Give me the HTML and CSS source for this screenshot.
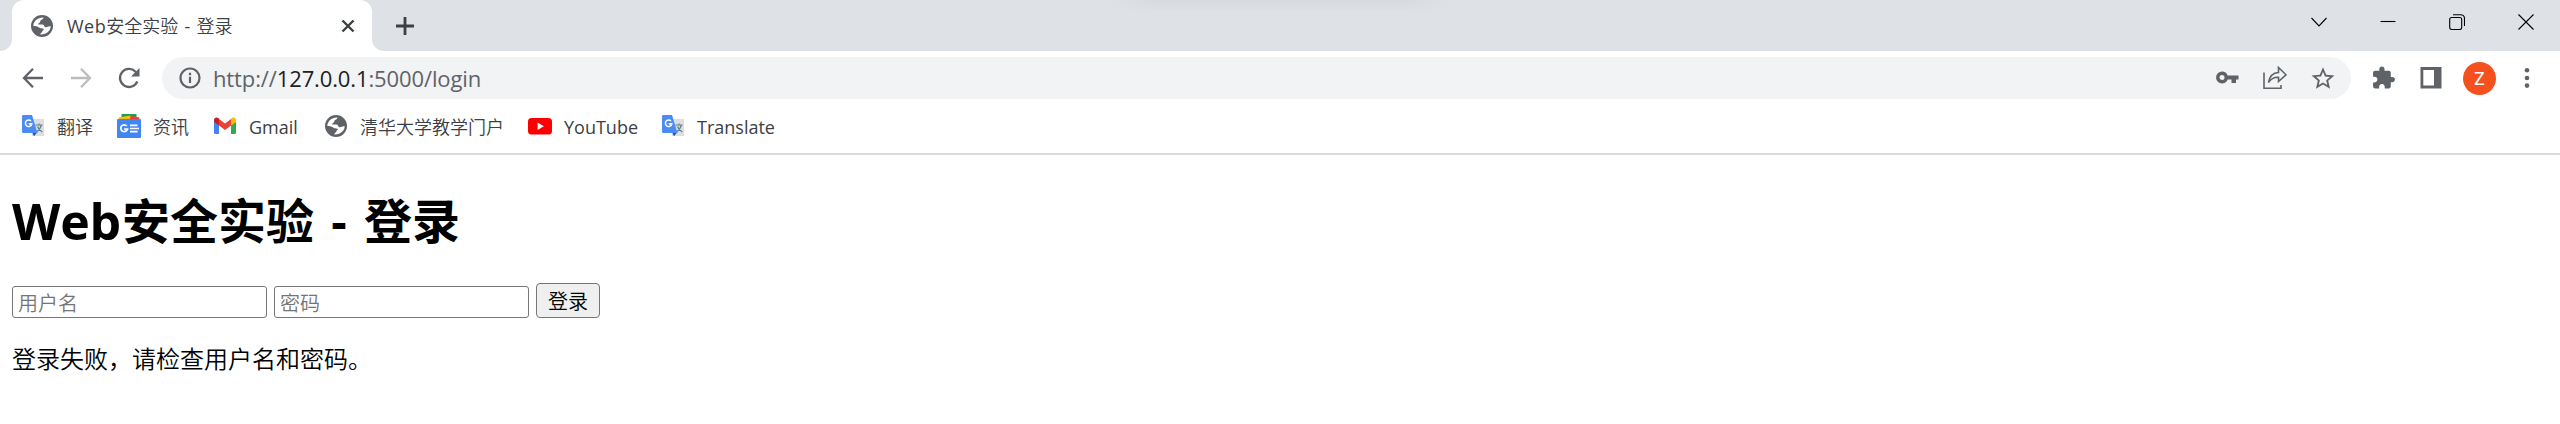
FILE: index.html
```html
<!DOCTYPE html>
<html lang="zh-CN">
<head>
<meta charset="utf-8">
<title>Web安全实验 - 登录</title>
<link rel="stylesheet" href="styles.css">
</head>
<body>
<svg class="defs" aria-hidden="true">
  <symbol id="globe" viewBox="0 0 22 22">
    <circle cx="11" cy="11" r="11" fill="#5f6368"/>
    <path d="M2.300 11C2.300 6.500 6.500 2.300 12.500 2.500C12.300 4.200 10.800 4.400 9.800 5.300C9 6.100 9.600 7 8.500 7.700C7.600 8.300 6.800 8.500 7.200 9.600H11.500C13.500 9.800 12.800 12 14.500 12.200C16.500 12.400 17 11 19.700 11.300C19.500 16 15.500 19.800 9.300 19.500C9.200 17.900 11 17.800 11.300 16.500C11.500 15.300 12.800 15.500 12.800 14.300C12.700 13.300 10.500 13.700 9.300 13.200C7.500 12.400 7 11 2.300 11Z" fill="#fff"/>
  </symbol>
  <symbol id="translate" viewBox="0 0 24 24">
    <path d="M9 5H22Q23 5 23 6V22H11Z" fill="#dcdee0"/>
    <path d="M14.500 11H21.500M18 9.500V11M20.500 11C19.700 14 17.500 16.500 15.500 18M16.500 12.500C17.500 15 19.500 17 21.300 18" stroke="#607d8b" stroke-width="1.200" fill="none"/>
    <path d="M11 18H16.500L13 22.300Z" fill="#3549b5"/>
    <path d="M2.200 1H11L16.500 19H2.200Q1 19 1 17.800V2.200Q1 1 2.200 1Z" fill="#4b8bf5"/>
    <path d="M10 7.100A3.200 3.200 0 1 0 10.800 9.800H7.700" stroke="#fff" stroke-width="1.500" fill="none"/>
  </symbol>
</svg>

<header class="browser">
  <div class="tabstrip">
    <div class="tab">
      <svg class="favicon"><use href="#globe"/></svg>
      <span class="tab-title"><span class="tab-latin">Web</span>安全实验 - 登录</span>
      <svg class="tab-close" viewBox="0 0 14 14"><path d="M1.500 1.500L12.500 12.500M12.500 1.500L1.500 12.500"/></svg>
    </div>
    <svg class="new-tab" viewBox="0 0 18 18"><path d="M9 0V18M0 9H18"/></svg>
    <div class="top-shadow"></div>
    <div class="window-controls">
      <svg viewBox="0 0 16 16"><path d="M.5 4L8 12L15.500 4"/></svg>
      <svg viewBox="0 0 16 16"><path d="M.5 7.500H15.500"/></svg>
      <svg viewBox="0 0 16 16"><rect x=".7" y="3.500" width="12" height="12" rx="2"/><path d="M4 .7H11.500Q15.500 .7 15.500 4.700V12"/></svg>
      <svg viewBox="0 0 16 16"><path d="M.5 .5L15.500 15.500M15.500 .5L.5 15.500"/></svg>
    </div>
  </div>

  <div class="toolbar">
    <div class="nav">
      <svg viewBox="0 0 24 24"><path d="M22 12H3.500M12 2.800L3 12L12 21.200"/></svg>
      <svg class="disabled" viewBox="0 0 24 24"><path d="M2 12H20.500M12 2.800L21 12L12 21.200"/></svg>
      <svg viewBox="0 0 24 24"><path d="M20.300 15.500A9 9 0 1 1 18.500 5.700L20.500 8"/><path class="solid" d="M22.500 2V10.500H14Z"/></svg>
    </div>
    <div class="omnibox">
      <svg class="info" viewBox="0 0 22 22"><circle cx="11" cy="11" r="9.500"/><path d="M11 9.800V16M11 5.800V8.200"/></svg>
      <span class="url">http://<b>127.0.0.1</b>:5000/login</span>
      <div class="page-actions">
        <svg class="fill" viewBox="0 0 24 24"><path fill-rule="evenodd" d="M7 5.500A6 6 0 1 0 12.700 13.500H16.500V17H21V13.500H23.500V9.500H12.700A6 6 0 0 0 7 5.500ZM7 9A2.500 2.500 0 1 1 7 14A2.500 2.500 0 0 1 7 9Z"/></svg>
        <svg class="share" viewBox="0 0 24 24"><path d="M1 6.500V22.300H18V19M5.500 16.500C6.500 10.500 10 6.800 15.500 6.500V1.500L23 8.800L15.500 15.500V11.200C11 11 8 12.500 5.500 16.500Z"/></svg>
        <svg class="fill" viewBox="1.500 1 21 21"><path d="M22 9.240l-7.190-.62L12 2 9.190 8.630 2 9.240l5.460 4.730L5.820 21 12 17.270 18.180 21l-1.630-7.030L22 9.240zM12 15.400l-3.760 2.270 1-4.280-3.320-2.880 4.380-.38L12 6.100l1.710 4.040 4.380.38-3.320 2.880 1 4.280L12 15.400z"/></svg>
      </div>
    </div>
    <div class="extensions">
      <svg class="fill" viewBox="1 .5 23 23"><path d="M20.500 11H19V7c0-1.100-.9-2-2-2h-4V3.500C13 2.120 11.880 1 10.500 1S8 2.120 8 3.500V5H4c-1.100 0-1.990.9-1.990 2v3.800H3.500c1.490 0 2.700 1.210 2.700 2.700s-1.210 2.700-2.700 2.700H2V20c0 1.100.9 2 2 2h3.800v-1.500c0-1.490 1.210-2.700 2.700-2.700 1.490 0 2.700 1.210 2.700 2.700V22H17c1.100 0 2-.9 2-2v-4h1.500c1.380 0 2.500-1.120 2.500-2.500S21.880 11 20.500 11z"/></svg>
      <svg class="fill" viewBox="0 0 24 24"><path fill-rule="evenodd" d="M1.500 1H22.500V22.500H1.500ZM4.300 4V19.500H15V4Z"/></svg>
      <span class="avatar">Z</span>
      <svg class="fill menu" viewBox="0 0 24 24"><circle cx="12" cy="4.300" r="2.300"/><circle cx="12" cy="12" r="2.300"/><circle cx="12" cy="19.600" r="2.300"/></svg>
    </div>
  </div>

  <nav class="bookmarks">
    <a class="bookmark"><svg viewBox="0 0 24 24"><use href="#translate"/></svg><span>翻译</span></a>
    <a class="bookmark"><svg viewBox="0 0 24 24"><path d="M4.500 0H19.500V5H4.500Z" fill="#1e9e54"/><path d="M1.500 3.500L13 1.500L15 6H2Z" fill="#fbbc04"/><path d="M14 1.800L22.500 3.500L22 6H12.500Z" fill="#ea4335"/><rect y="5" width="24" height="19" rx="1" fill="#4285f4"/><path d="M9.800 12A3.400 3.400 0 1 0 10.500 15H7" stroke="#fff" stroke-width="1.700" fill="none"/><path d="M13 11.300H20.500M13 14.500H22M13 17.700H20.500" stroke="#fff" stroke-width="1.700"/></svg><span>资讯</span></a>
    <a class="bookmark gmail"><svg viewBox="0 0 24 24"><path d="M1 6H6V20H2.500Q1 20 1 18.500Z" fill="#4285f4"/><path d="M18 6H23V18.500Q23 20 21.500 20H18Z" fill="#34a853"/><path d="M6 5L12 9.500L18 5V11.500L12 16L6 11.500Z" fill="#ea4335"/><path d="M1 8V6C1 3.300 3.800 2.700 6 4.500V11.500Z" fill="#c5221f"/><path d="M23 8V6C23 3.300 20.200 2.700 18 4.500V11.500Z" fill="#fbbc04"/></svg><span>Gmail</span></a>
    <a class="bookmark"><svg viewBox="-1 -1 24 24"><use href="#globe" width="22" height="22"/></svg><span>清华大学教学门户</span></a>
    <a class="bookmark youtube"><svg viewBox="0 0 24 24"><rect y="4" width="24" height="16.500" rx="3.500" fill="#f00"/><path d="M9.600 8.500V16L15.800 12.250Z" fill="#fff"/></svg><span>YouTube</span></a>
    <a class="bookmark"><svg viewBox="0 0 24 24"><use href="#translate"/></svg><span>Translate</span></a>
  </nav>
</header>

<main class="page">
  <h1><span class="word">Web</span>安全实验<span class="dash">-</span>登录</h1>
  <form class="login">
    <input type="text" placeholder="用户名">
    <input type="password" placeholder="密码">
    <button type="button">登录</button>
  </form>
  <p>登录失败，请检查用户名和密码。</p>
</main>
</body>
</html>
```
FILE: styles.css
```css
* { box-sizing: border-box; }
body {
  margin: 0;
  background: #fff;
  color: #000;
  font-family: "Open Sans", "Noto Sans CJK SC DemiLight", "Noto Sans CJK SC", sans-serif;
}
svg { display: block; flex: none; }
.defs { position: absolute; width: 0; height: 0; }

.tabstrip {
  display: flex;
  height: 51px;
  padding-left: 12px;
  background: #dee1e6;
}
.tab {
  position: relative;
  display: flex;
  align-items: center;
  width: 360px;
  height: 51px;
  padding: 0 17px 0 19px;
  border-radius: 12px 12px 0 0;
  background: #fff;
}
.tab::before, .tab::after {
  content: "";
  position: absolute;
  bottom: 0;
  width: 12px;
  height: 12px;
}
.tab::before { left: -12px; background: radial-gradient(circle at 0 0, transparent 11.5px, #fff 12.5px); }
.tab::after { right: -12px; background: radial-gradient(circle at 100% 0, transparent 11.5px, #fff 12.5px); }
.favicon { width: 22px; height: 22px; }
.tab-title {
  flex: 1;
  margin-left: 14px;
  font-size: 18px;
  line-height: 24px;
  color: #3c4043;
  white-space: nowrap;
  word-spacing: 1.5px;
}
.tab-latin { letter-spacing: .5px; }
.tab-close { width: 14px; height: 14px; fill: none; stroke: #3c4043; stroke-width: 2.4; }
.new-tab { width: 18px; height: 18px; margin: 17px 0 0 24px; fill: none; stroke: #3c4043; stroke-width: 2.8; }
.top-shadow {
  width: 340px;
  height: 12px;
  margin-left: 696px;
  background: linear-gradient(90deg, #dee1e6, transparent 12%, transparent 88%, #dee1e6), linear-gradient(#d7dadf, #dee1e6);
}
.window-controls { display: flex; gap: 53px; margin: 14px 26px 0 auto; }
.window-controls svg { width: 16px; height: 16px; fill: none; stroke: #000; stroke-width: 1.1; }

.toolbar {
  display: flex;
  align-items: center;
  height: 54px;
  padding-left: 21px;
}
.nav { display: flex; gap: 24px; }
.nav svg { width: 24px; height: 24px; fill: none; stroke: #5f6368; stroke-width: 2.3; }
.nav .disabled { stroke: #babcbe; }
.nav .solid { fill: #5f6368; stroke: none; }
.omnibox {
  display: flex;
  flex: none;
  align-items: center;
  width: 2189px;
  height: 42px;
  margin-left: 21px;
  padding: 0 16px 0 17px;
  border-radius: 21px;
  background: #f1f3f4;
}
.info { width: 22px; height: 22px; fill: none; stroke: #5f6368; stroke-width: 2.2; }
.url { margin-left: 12px; font-size: 22px; line-height: 28px; letter-spacing: -.12px; color: #5f6368; }
.url b { font-weight: 400; color: #202124; }
.page-actions { display: flex; gap: 24px; margin-left: auto; }
.page-actions svg, .extensions svg { width: 24px; height: 24px; }
.fill { fill: #5f6368; }
.share { fill: none; stroke: #5f6368; stroke-width: 1.6; }
.extensions { display: flex; align-items: center; margin-left: 21px; gap: 23px; }
.avatar {
  width: 33px;
  height: 33px;
  margin: 0 1px 0 -3px;
  border-radius: 50%;
  background: #f4511e;
  color: #fff;
  font: 18px/33px Roboto, sans-serif;
  text-align: center;
}
.extensions .menu { margin-left: -5px; }

.bookmarks {
  display: flex;
  align-items: center;
  gap: 24px;
  height: 50px;
  padding: 0 21px 6px;
  border-bottom: 2px solid #dadada;
}
.bookmark {
  display: flex;
  align-items: center;
  gap: 12px;
  font-size: 18px;
  line-height: 24px;
  color: #3c4043;
  white-space: nowrap;
}
.bookmark svg { width: 24px; height: 24px; }
.bookmark span { padding-top: 2px; }
.gmail span { width: 51px; }
.youtube span { width: 73px; }

.page { padding: 34px 12px 0; }
.page h1 {
  display: flex;
  height: 64px;
  margin: 0;
  font-size: 48px;
  line-height: 64px;
  font-weight: 700;
  font-family: "Open Sans", "Noto Sans CJK SC", sans-serif;
}
.word { width: 110px; font-size: 50px; letter-spacing: -.2px; }
.dash { width: 50px; text-align: center; }
.login { display: flex; align-items: flex-end; gap: 7px; height: 35px; margin-top: 30px; }
.login input, .login button {
  border: 1px solid #767676;
  font-family: "Noto Sans CJK SC DemiLight", "Noto Sans CJK SC", sans-serif;
  font-size: 20px;
}
.login input {
  width: 255px;
  height: 32px;
  padding: 0 5px;
  border-radius: 3px;
}
.login input::placeholder { color: #757575; }
.login button {
  width: 64px;
  height: 35px;
  padding: 0;
  border-radius: 4px;
  background: #efefef;
  color: #000;
  line-height: 32px;
}
.page p { margin: 25px 0 0; font-size: 24px; line-height: 32px; }
```
